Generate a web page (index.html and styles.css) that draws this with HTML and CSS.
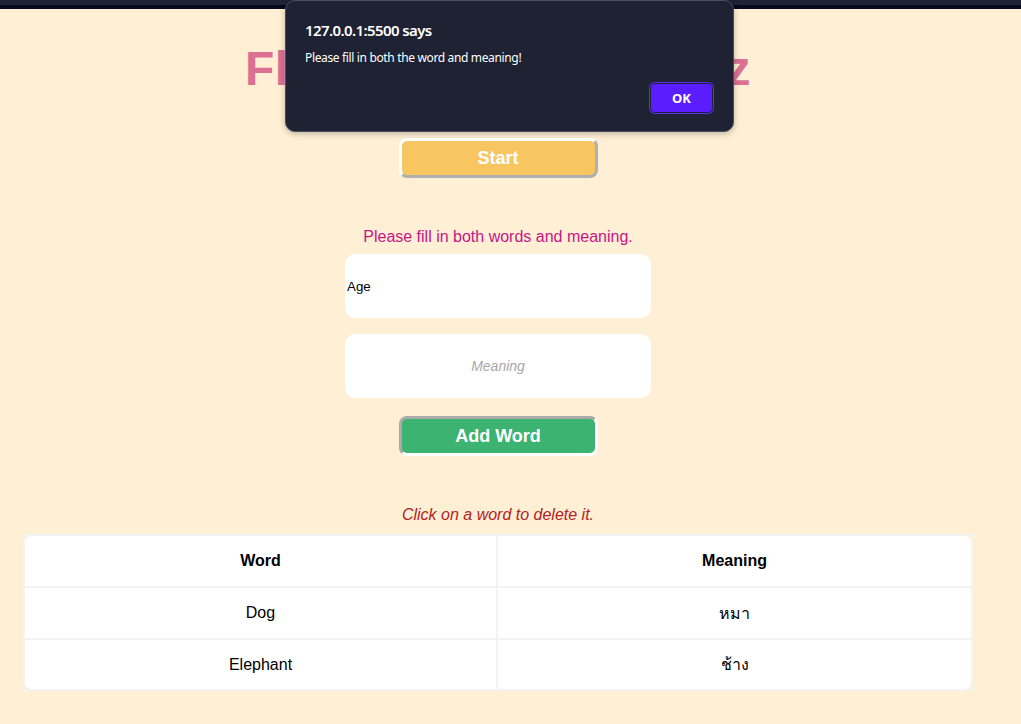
FILE: index.html
```html
<!DOCTYPE html>
<html lang="en">
<head>
<meta charset="utf-8">
<title>Flashcard Vocab Quiz</title>
<link rel="stylesheet" href="styles.css">
</head>
<body>
<div class="topbar"><div class="topbar-a"></div><div class="topbar-b"></div></div>
<main class="page">
  <h1 class="title">Flashcard Vocab Quiz</h1>
  <button class="btn btn-start" type="button">Start</button>
  <p class="hint">Please fill in both words and meaning.</p>
  <input class="field field-word" type="text" value="Age">
  <input class="field field-meaning" type="text" placeholder="Meaning">
  <button class="btn btn-add" type="button">Add Word</button>
  <p class="note">Click on a word to delete it.</p>
  <table class="words">
    <thead>
      <tr><th class="c1">Word</th><th class="c2">Meaning</th></tr>
    </thead>
    <tbody>
      <tr><td class="c1">Dog</td><td class="c2">หมา</td></tr>
      <tr class="last"><td class="c1">Elephant</td><td class="c2">ช้าง</td></tr>
    </tbody>
  </table>
</main>
<div class="dialog" role="alertdialog">
  <div class="dialog-title">127.0.0.1:5500 says</div>
  <div class="dialog-msg">Please fill in both the word and meaning!</div>
  <div class="dialog-actions"><button class="dialog-ok" type="button">OK</button></div>
</div>
</body>
</html>
```
FILE: styles.css
```css
html, body {
  margin: 0;
  padding: 0;
}
body {
  background: #ffefd5;
  font-family: "Liberation Sans", Arial, sans-serif;
  width: 1021px;
  height: 724px;
  overflow: hidden;
  position: relative;
}
.topbar-a {
  height: 5px;
  background: #1f2235;
}
.topbar-b {
  height: 4px;
  background: #030a1a;
}
.page {
  width: 996px;
  display: flex;
  flex-direction: column;
  align-items: center;
}
.title {
  margin: 32px 0 0;
  font-size: 48px;
  font-weight: bold;
  line-height: 55px;
  letter-spacing: 0.4px;
  color: #db7093;
}
.btn {
  box-sizing: border-box;
  width: 199px;
  height: 40px;
  border-width: 3px;
  border-style: solid;
  border-radius: 8px;
  color: #fff;
  font-family: "Liberation Sans", Arial, sans-serif;
  font-size: 18px;
  font-weight: bold;
  padding: 0;
}
.btn-start {
  margin-top: 42px;
  background: #f7c660;
  border-color: #fff #b0b0b0 #b0b0b0 #fff;
}
.btn-add {
  margin-top: 18px;
  background: #3cb371;
  border-color: #a9a9a9 #fff #fff #a9a9a9;
}
.hint {
  margin: 50px 0 0;
  font-size: 16px;
  line-height: 18px;
  color: #c71585;
}
.field {
  box-sizing: border-box;
  width: 306px;
  height: 64px;
  border: none;
  border-radius: 10px;
  background: #fff;
  outline: none;
  font-family: "Liberation Sans", Arial, sans-serif;
  color: #000;
}
.field-word {
  margin-top: 8px;
  padding: 1px 2px;
  font-size: 13.33px;
}
.field-meaning {
  margin-top: 16px;
  text-align: center;
  font-size: 14px;
}
.field-meaning::placeholder {
  color: #a8a8a8;
  font-style: italic;
}
.note {
  margin: 50px 0 0;
  font-size: 16px;
  line-height: 18px;
  font-style: italic;
  color: #b22222;
}
.words {
  margin-top: 10px;
  width: 950px;
  border: 2px solid #f3f3f3;
  border-collapse: separate;
  border-spacing: 0;
  font-size: 16px;
}
.words th, .words td {
  background: #fff;
  height: 50px;
  padding: 0;
  text-align: center;
  color: #000;
  border-bottom: 2px solid #f3f3f3;
}
.words th { font-weight: bold; }
.words .c1 {
  width: 471px;
  border-right: 2px solid #f3f3f3;
}
.words tr.last td {
  border-bottom: none;
  height: 49px;
}
.words thead th.c1 { border-top-left-radius: 6px; }
.words thead th.c2 { border-top-right-radius: 6px; }
.words tr.last td.c1 { border-bottom-left-radius: 6px; }
.words tr.last td.c2 { border-bottom-right-radius: 6px; }

.dialog {
  position: absolute;
  left: 285px;
  top: 0;
  width: 449px;
  box-sizing: border-box;
  height: 132px;
  background: #1e2233;
  border: 1px solid #4a4e5c;
  border-radius: 10px;
  padding: 19px 21px 18px 19px;
  font-family: "Noto Sans", "Open Sans", sans-serif;
  color: #fff;
  box-shadow: 0 2px 6px rgba(0,0,0,0.25);
}
.dialog-title {
  font-size: 15px;
  font-weight: 600;
  line-height: 20px;
  letter-spacing: -0.6px;
}
.dialog-msg {
  margin-top: 10px;
  font-size: 12px;
  line-height: 16px;
  letter-spacing: -0.35px;
}
.dialog-actions {
  display: flex;
  justify-content: flex-end;
  margin-top: 18px;
}
.dialog-ok {
  width: 61px;
  height: 28px;
  border: none;
  border-radius: 4px;
  background: #5b1dff;
  color: #fff;
  font-family: "Noto Sans", "Open Sans", sans-serif;
  font-size: 13px;
  font-weight: bold;
  padding: 0;
  box-shadow: 0 0 0 1px #1e2233, 0 0 0 2px #5b2df0;
}
```
